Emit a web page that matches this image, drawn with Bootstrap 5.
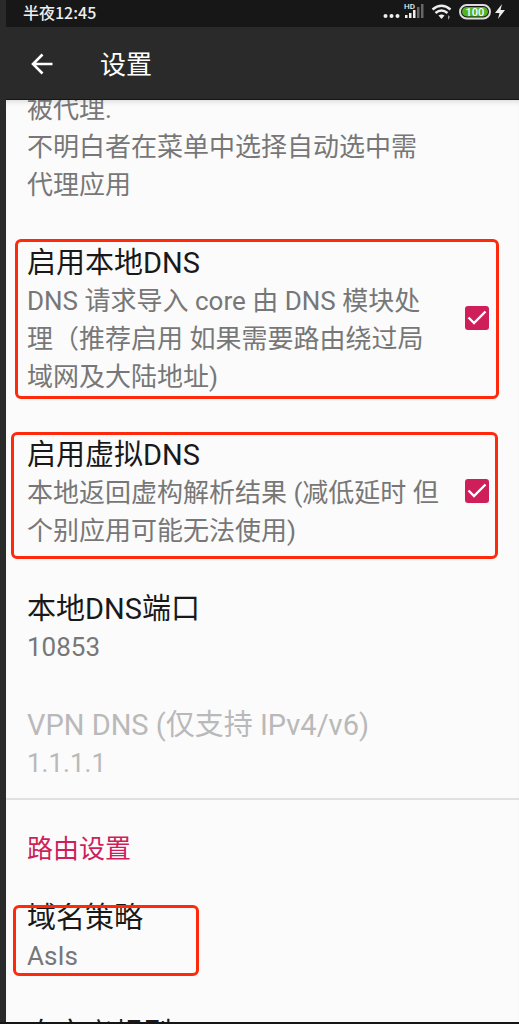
<!DOCTYPE html>
<html lang="zh-CN">
<head>
<meta charset="utf-8">
<meta name="viewport" content="width=device-width, initial-scale=1">
<title>设置</title>
<link href="https://cdn.jsdelivr.net/npm/bootstrap@5.3.0/dist/css/bootstrap.min.css" rel="stylesheet">
<style>
body { background: #2a2a2a; font-family: Roboto, "Noto Sans CJK SC", sans-serif; color: #191919; }
.screen { padding-left: 6px; border-bottom: 2px solid #151515; }
.status-bar { height: 27px; padding: 0 13px 3px 17px; background: #171717; color: #eee; font: 500 16px/24px "Noto Sans CJK SC", sans-serif; }
.app-bar { height: 73px; padding: 3px 0 0 20px; gap: 42px; border-bottom: 1px solid #151515; }
.app-bar h1 { font-size: 26px; line-height: 38px; font-weight: 400; }
.back { width: 32px; height: 32px; }
.prefs { background: #fbfbfb; box-shadow: inset 0 5px 5px -3px #ddd; }
.scrolled { margin-top: -10px; }
.pref { padding: 21px 30px 20px 21px; border: 0; background: none; color: inherit; }
.pref.first { padding-top: 0; }
.pref.last { padding-bottom: 16px; }
.pref-title { font-size: 29px; line-height: 37px; }
.pref-text { font-size: 26px; line-height: 38px; color: #777; }
.pref-slot { width: 24px; margin-left: 25px; padding-bottom: 6px; }
.pref:disabled, .pref:disabled .pref-text { color: #b9b9b9; }
.pref .form-check-input { width: 24px; height: 24px; margin: 0; border: 0; border-radius: 3px; background-color: #fff; box-shadow: inset 0 0 0 2px #777; }
.pref .form-check-input:checked { background-color: #ce1f5b; box-shadow: none; background-size: 24px 24px; background-image: url("data:image/svg+xml,%3csvg xmlns='http://www.w3.org/2000/svg' viewBox='0 0 24 24'%3e%3cpath d='M3.500 11.500l5.500 5.500L20.500 5.500' fill='none' stroke='%23fff' stroke-width='2.400'/%3e%3c/svg%3e"); }
.section-title { border-top: 2px solid #e0e0e0; padding: 30px 21px 11px; font-size: 26px; line-height: 38px; font-weight: 400; color: #ce1f5b; }
.outline { position: absolute; border: 3px solid #ff2a0c; border-radius: 6px; pointer-events: none; }
.outline-local { inset: 15px 20px 17px 9px; }
.outline-fake { inset: 16px 21px 11px 5px; }
.outline-domain { inset: 26px auto 19px 7px; width: 186px; }
</style>
</head>
<body>
<div class="screen vh-100 d-flex flex-column overflow-hidden">
  <div class="status-bar d-flex justify-content-between align-items-center flex-shrink-0">
    <span>半夜12:45</span>
    <svg width="124" height="24" viewBox="382 0 124 24" aria-hidden="true">
      <g fill="#eee">
        <circle cx="385.500" cy="16" r="2"/><circle cx="391.500" cy="16" r="2"/><circle cx="397.500" cy="16" r="2"/>
        <text x="404" y="9" font-size="8" font-family="Roboto, sans-serif">HD</text>
        <path d="M405 15h2.500v3h-2.500zM409 13h2.500v5h-2.500zM413 10h2.500v8h-2.500z"/>
        <path d="M417 7h2.500v11h-2.500zM421 4h2.500v14h-2.500z" fill="#666"/>
        <path d="M438.500 15.500q3-2.200 6 0l-3 3.500z"/>
        <path d="M502 4l-7 9h4.500l-1.500 6 7-9h-4.500l1.500-6z"/>
        <path d="M448 15l2 2-2 3z" fill="#999"/>
      </g>
      <path d="M432.500 9.500q9-7.500 18 0M435.500 13q6-5 12 0" fill="none" stroke="#eee" stroke-width="2.400"/>
      <rect x="460" y="5" width="30" height="13.500" rx="6.750" fill="#171717" stroke="#ddd" stroke-width="2"/>
      <rect x="462" y="7" width="26" height="9.500" rx="4.750" fill="#54b324"/>
      <text x="475" y="16" text-anchor="middle" fill="#fff" font-size="11" font-family="Roboto, sans-serif" font-weight="500">100</text>
    </svg>
  </div>
  <header class="app-bar d-flex align-items-center flex-shrink-0 text-white">
    <button type="button" class="back btn p-0 border-0 text-white d-flex align-items-center justify-content-center" aria-label="返回">
      <svg width="32" height="32" viewBox="0 0 32 32" fill="none" stroke="currentColor" stroke-width="2.600" aria-hidden="true"><path d="M26.500 15H8M16.500 5.500L7 15l9.500 9.500"/></svg>
    </button>
    <h1 class="m-0">设置</h1>
  </header>
  <main class="prefs flex-grow-1 overflow-hidden">
    <div class="scrolled">
      <div class="pref first d-flex">
        <div class="pref-text flex-fill">被代理.<br>不明白者在菜单中选择自动选中需代理应用</div>
        <span class="pref-slot flex-shrink-0"></span>
      </div>
      <div class="pref position-relative d-flex align-items-center">
        <label class="flex-fill" for="localDns">
          <span class="pref-title d-block">启用本地DNS</span>
          <span class="pref-text d-block">DNS 请求导入 core 由 DNS 模块处理（推荐启用 如果需要路由绕过局域网及大陆地址)</span>
        </label>
        <span class="pref-slot flex-shrink-0 d-flex"><input class="form-check-input" type="checkbox" id="localDns" checked></span>
        <div class="outline outline-local"></div>
      </div>
      <div class="pref position-relative d-flex align-items-center">
        <label class="flex-fill" for="fakeDns">
          <span class="pref-title d-block">启用虚拟DNS</span>
          <span class="pref-text d-block">本地返回虚构解析结果 (减低延时 但个别应用可能无法使用)</span>
        </label>
        <span class="pref-slot flex-shrink-0 d-flex"><input class="form-check-input" type="checkbox" id="fakeDns" checked></span>
        <div class="outline outline-fake"></div>
      </div>
      <button type="button" class="pref d-block w-100 text-start">
        <span class="pref-title d-block">本地DNS端口</span>
        <span class="pref-text d-block">10853</span>
      </button>
      <button type="button" class="pref last d-block w-100 text-start" disabled>
        <span class="pref-title d-block">VPN DNS (仅支持 IPv4/v6)</span>
        <span class="pref-text d-block">1.1.1.1</span>
      </button>
      <h2 class="section-title m-0">路由设置</h2>
      <div class="position-relative">
        <button type="button" class="pref d-block w-100 text-start">
          <span class="pref-title d-block">域名策略</span>
          <span class="pref-text d-block">AsIs</span>
        </button>
        <div class="outline outline-domain"></div>
      </div>
      <button type="button" class="pref d-block w-100 text-start">
        <span class="pref-title d-block">自定义规则</span>
      </button>
    </div>
  </main>
</div>
<script src="https://cdn.jsdelivr.net/npm/bootstrap@5.3.0/dist/js/bootstrap.bundle.min.js"></script>
</body>
</html>
